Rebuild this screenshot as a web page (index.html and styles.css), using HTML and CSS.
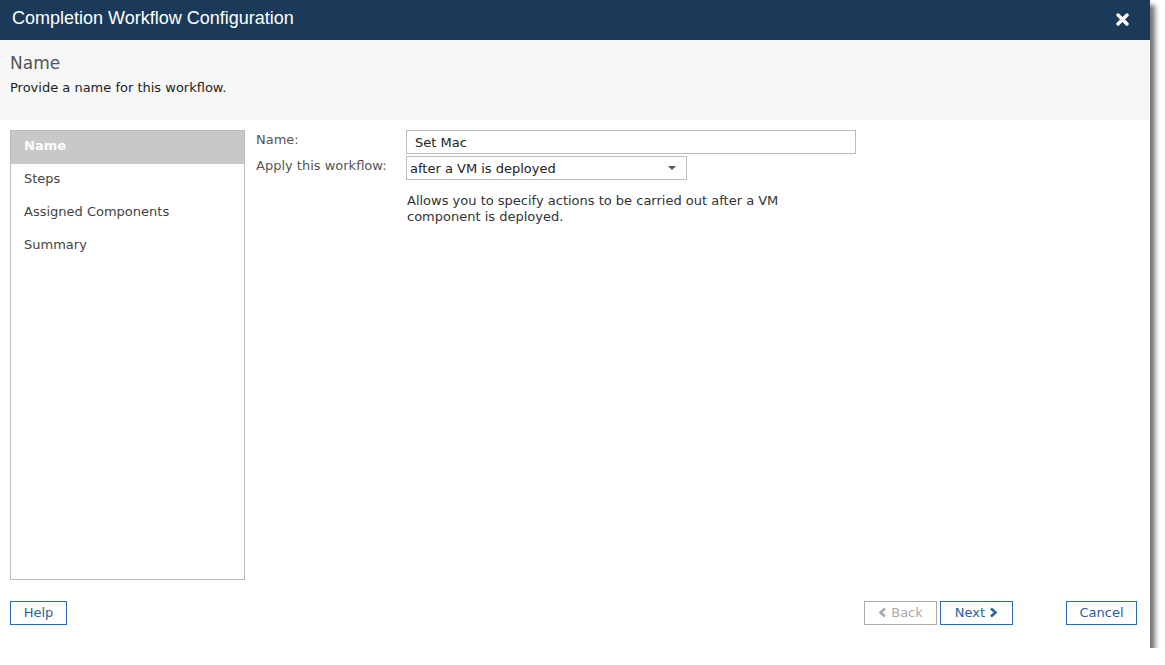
FILE: index.html
```html
<!DOCTYPE html>
<html lang="en">
<head>
  <meta charset="UTF-8">
  <title>Completion Workflow Configuration</title>
  <link rel="stylesheet" href="styles.css">
</head>
<body>

<div class="dialog">
  <!-- Title bar -->
  <div class="dialog-header">
    <span class="dialog-title">Completion Workflow Configuration</span>
    <span class="close-btn">
      <svg width="13" height="13" viewBox="0 0 13 13"><path d="M2 2 L11 11 M11 2 L2 11" stroke="#fff" stroke-width="3.4" stroke-linecap="round"/></svg>
    </span>
  </div>

  <!-- Step intro -->
  <div class="step-intro">
    <h2>Name</h2>
    <p>Provide a name for this workflow.</p>
  </div>

  <div class="dialog-body">
    <!-- Wizard steps -->
    <div class="steps">
      <a href="#" class="step-item active">Name</a>
      <a href="#" class="step-item">Steps</a>
      <a href="#" class="step-item">Assigned Components</a>
      <a href="#" class="step-item">Summary</a>
    </div>

    <!-- Form -->
    <div class="form">
      <div class="form-row">
        <label class="form-label">Name:</label>
        <div class="name-input">Set Mac</div>
      </div>
      <div class="form-row">
        <label class="form-label">Apply this workflow:</label>
        <div class="field">
          <div class="select">
            <span>after a VM is deployed</span>
            <span class="caret"></span>
          </div>
          <p class="hint">Allows you to specify actions to be carried out after a VM component is deployed.</p>
        </div>
      </div>
    </div>
  </div>

  <!-- Footer buttons -->
  <div class="dialog-footer">
    <button class="btn">Help</button>
    <div class="nav-btns">
      <button class="btn disabled">
        <svg width="9" height="11" viewBox="0 0 9 11"><path d="M7 1.5 L2.5 5.5 L7 9.5" fill="none" stroke="#aaa" stroke-width="2.6"/></svg>
        Back
      </button>
      <button class="btn">
        Next
        <svg width="9" height="11" viewBox="0 0 9 11"><path d="M2 1.5 L6.5 5.5 L2 9.5" fill="none" stroke="#2b62a0" stroke-width="2.6"/></svg>
      </button>
      <button class="btn cancel">Cancel</button>
    </div>
  </div>
</div>

</body>
</html>
```

FILE: styles.css
```css
/* General reset */
* {
  margin: 0;
  padding: 0;
  box-sizing: border-box;
}

body {
  font-family: "DejaVu Sans", Verdana, sans-serif;
  font-size: 13px;
  color: #333;
  background-color: #fff;
}

/* Dialog frame */
.dialog {
  width: 1150px;
  height: 648px;
  background-color: #fff;
  box-shadow: 5px 5px 5px rgba(0, 0, 0, 0.55);
  display: flex;
  flex-direction: column;
}

.dialog-header {
  height: 40px;
  background-color: #1b3a5a;
  display: flex;
  align-items: center;
  justify-content: space-between;
  padding: 0 21px 3px 12px;
}

.dialog-title {
  font-family: "Liberation Sans", Arial, sans-serif;
  font-size: 18px;
  color: #fff;
}

.close-btn {
  display: flex;
  margin-top: 1px;
}

/* Intro section */
.step-intro {
  height: 80px;
  background-color: #f7f7f7;
  padding: 12px 10px 0;
}

.step-intro h2 {
  font-size: 17px;
  font-weight: normal;
  color: #555;
  line-height: 22px;
}

.step-intro p {
  font-size: 13px;
  margin-top: 6px;
  color: #222;
}

/* Body */
.dialog-body {
  display: flex;
  padding: 10px 10px 0;
}

.steps {
  width: 235px;
  height: 450px;
  border: 1px solid #bbb;
  display: flex;
  flex-direction: column;
}

.step-item {
  height: 33px;
  line-height: 29px;
  padding-left: 13px;
  color: #444;
  text-decoration: none;
}

.step-item.active {
  background-color: #c8c8c8;
  color: #fff;
  font-weight: bold;
}

.form {
  margin-left: 11px;
  display: flex;
  flex-direction: column;
  gap: 2px;
}

.form-row {
  display: flex;
  align-items: flex-start;
}

.form-label {
  width: 150px;
  color: #555;
  line-height: 20px;
}

.name-input {
  width: 450px;
  height: 24px;
  border: 1px solid #bbb;
  padding-left: 8px;
  line-height: 23px;
  color: #222;
}

.select {
  width: 281px;
  height: 24px;
  border: 1px solid #bbb;
  padding: 0 10px 0 3px;
  display: flex;
  align-items: center;
  justify-content: space-between;
  color: #222;
}

.caret {
  width: 0;
  height: 0;
  border-left: 4px solid transparent;
  border-right: 4px solid transparent;
  border-top: 4px solid #555;
}

.hint {
  width: 400px;
  margin-top: 13px;
  padding-left: 1px;
  line-height: 16px;
  color: #333;
}

/* Footer */
.dialog-footer {
  display: flex;
  justify-content: space-between;
  padding: 21px 13px 0 10px;
}

.nav-btns {
  display: flex;
}

.btn {
  font-family: "DejaVu Sans", Verdana, sans-serif;
  font-size: 13px;
  height: 24px;
  min-width: 57px;
  padding: 0 12px 1px;
  background-color: #fff;
  border: 1px solid #2b6cb0;
  color: #2b5f98;
  display: flex;
  align-items: center;
  gap: 4px;
  justify-content: center;
}

.btn.disabled {
  border-color: #aaa;
  color: #aaa;
  margin-right: 3px;
}

.nav-btns .btn {
  width: 73px;
}

.btn.cancel {
  width: 71px;
  margin-left: 53px;
}
```
